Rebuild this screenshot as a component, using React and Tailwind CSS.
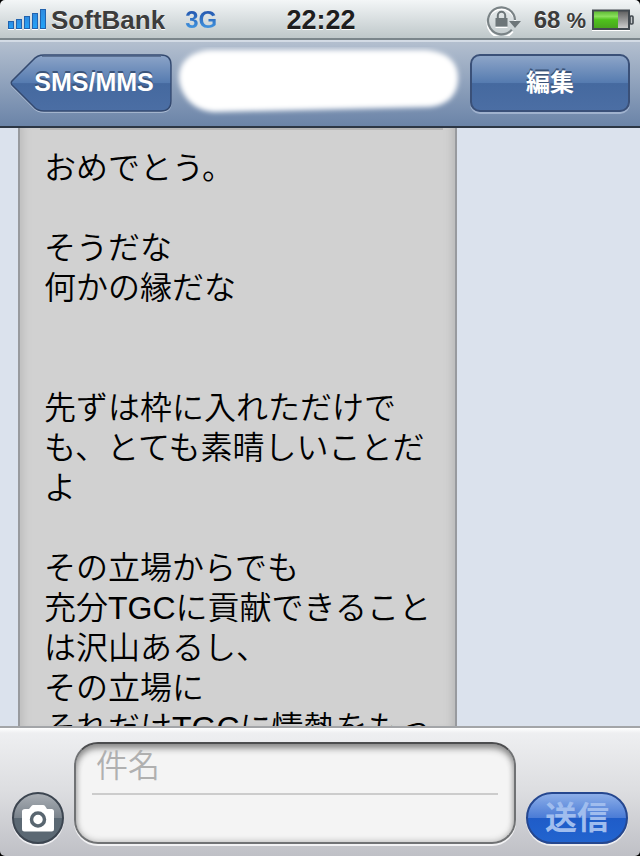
import React, { useState } from 'react';

const MESSAGE = `おめでとう。

そうだな
何かの縁だな


先ずは枠に入れただけで
も、とても素晴しいことだ
よ

その立場からでも
充分TGCに貢献できること
は沢山あるし、
その立場に
それだけTGCに情熱をもっ`;

const SignalIcon = () => (
  <svg width="39" height="22" viewBox="0 0 39 22" aria-hidden="true">
    <defs>
      <linearGradient id="signal" x1="0" y1="0" x2="0" y2="1">
        <stop offset="0" stopColor="#2f8be0" />
        <stop offset="1" stopColor="#22a4f8" />
      </linearGradient>
    </defs>
    <g fill="url(#signal)" stroke="#2163ae" strokeWidth="1">
      <rect x="0.5" y="12.5" width="5" height="7" />
      <rect x="8.5" y="10.5" width="5" height="9" />
      <rect x="16.5" y="7.5" width="5" height="12" />
      <rect x="24.5" y="4.5" width="5" height="15" />
      <rect x="32.5" y="0.5" width="5" height="19" />
    </g>
    <path d="M0 20.5h6M8 20.5h6M16 20.5h6M24 20.5h6M32 20.5h6" stroke="#fff" />
  </svg>
);

const RotationLockIcon = () => (
  <svg width="36" height="32" viewBox="0 0 36 32" aria-hidden="true">
    <path d="M26.8 26.5A14 14 0 1 1 29.5 17" transform="translate(0 1)" fill="none" stroke="#fff" strokeWidth="2" />
    <path d="M25.8 25.6A13.5 13.5 0 1 1 29 16" fill="none" stroke="#7a8386" strokeWidth="2.2" />
    <path d="M23 17h12l-6 7z" fill="#6d7679" />
    <rect x="9.5" y="14" width="12" height="8.5" fill="#6d7679" />
    <path d="M11.8 14.5v-3a3.7 3.7 0 0 1 7.4 0v3" fill="none" stroke="#6d7679" strokeWidth="2" />
    <path d="M9.5 23.5h12" stroke="#fff" />
  </svg>
);

const BatteryIcon = () => (
  <svg width="42" height="22" viewBox="0 0 42 22" aria-hidden="true">
    <defs>
      <linearGradient id="charge" x1="0" y1="0" x2="0" y2="1">
        <stop offset="0" stopColor="#5fbb36" />
        <stop offset="0.3" stopColor="#8be05c" />
        <stop offset="0.5" stopColor="#4fc21c" />
        <stop offset="1" stopColor="#48a41e" />
      </linearGradient>
      <linearGradient id="empty" x1="0" y1="0" x2="0" y2="1">
        <stop offset="0" stopColor="#5c5c5c" />
        <stop offset="1" stopColor="#d2d2d2" />
      </linearGradient>
    </defs>
    <path d="M0 21.5h38" stroke="#fff" />
    <rect x="1" y="1.500" width="36" height="18.500" fill="url(#empty)" stroke="#42494f" strokeWidth="2" />
    <rect x="2" y="2.500" width="24" height="16.500" fill="url(#charge)" />
    <rect x="38" y="7" width="3" height="8" rx="1" fill="#c5cacc" stroke="#42494f" strokeWidth="1.6" />
  </svg>
);

const BackShape = () => (
  <svg className="absolute inset-0 h-full w-full" viewBox="0 0 162 60" aria-hidden="true">
    <defs>
      <linearGradient id="back" x1="0" y1="0" x2="0" y2="1">
        <stop offset="0" stopColor="#8da5c8" />
        <stop offset="0.5" stopColor="#557bb0" />
        <stop offset="0.51" stopColor="#45699f" />
        <stop offset="1" stopColor="#4b6ea4" />
      </linearGradient>
    </defs>
    <path
      d="M34 2H151Q161 2 161 12V48Q161 58 151 58H34Q27 58 23 53L2 32Q0.5 30 2 28L23 7Q27 2 34 2Z"
      fill="none"
      stroke="#b2c1d8"
      strokeWidth="1.5"
      transform="translate(0 1)"
    />
    <path
      d="M34 2H151Q161 2 161 12V48Q161 58 151 58H34Q27 58 23 53L2 32Q0.5 30 2 28L23 7Q27 2 34 2Z"
      fill="url(#back)"
      stroke="#344a70"
      strokeWidth="1.5"
    />
    <path d="M32 3.500H151" stroke="#3e5172" strokeWidth="1" opacity="0.6" />
  </svg>
);

const ContactName = () => (
  <svg className="h-[72px] min-w-0 flex-1" viewBox="0 0 298 72" preserveAspectRatio="none" aria-hidden="true">
    <defs>
      <filter id="soft" x="-10%" y="-20%" width="120%" height="140%">
        <feGaussianBlur stdDeviation="2.5" />
      </filter>
    </defs>
    <path
      d="M38 3L252 3C276 4 286 16 286 31C286 47 276 59 256 60L42 65C20 64 7 46 7 30C7 14 20 4 38 3Z"
      fill="#fff"
      filter="url(#soft)"
    />
  </svg>
);

const CameraIcon = () => (
  <svg width="32" height="27" viewBox="0 0 32 27" aria-hidden="true">
    <path
      d="M3 4H7L9.5 1Q10 0 11.5 0H21Q22.500 0 23 1L25 4H29.500Q32 4 32 6.500V24Q32 26.500 29.500 26.500H2.500Q0 26.500 0 24V6.500Q0 4 3 4Z"
      fill="#fff"
    />
    <circle cx="16" cy="14.500" r="6.500" fill="#fff" stroke="#596670" strokeWidth="3.500" />
  </svg>
);

const StatusBar = () => (
  <header className="grid h-10 shrink-0 grid-cols-[1fr_auto_1fr] items-center border-b-2 border-[#7b868b] bg-gradient-to-b from-[#f3f6f7] to-[#bfc8ca] pr-1.5 pl-2 text-[26px] font-bold text-[#3c3c3c] [text-shadow:0_1px_0_#fff]">
    <div className="flex items-center gap-1">
      <SignalIcon />
      <span>SoftBank</span>
      <span className="ml-4 bg-gradient-to-b from-[#1d3f9c] to-[#4fb0f5] bg-clip-text text-2xl text-transparent [text-shadow:none]">
        3G
      </span>
    </div>
    <time className="text-[27px] text-[#1e1e1e]">22:22</time>
    <div className="flex items-center justify-end gap-1.5">
      <RotationLockIcon />
      <div className="ml-1.5 flex items-center gap-1.5 text-2xl">
        <span>68</span>
        <span className="text-[22px]">%</span>
      </div>
      <BatteryIcon />
    </div>
  </header>
);

const NavBar = () => (
  <nav className="flex h-[88px] shrink-0 items-center border-t-2 border-b-2 border-t-[#d3dbe5] border-b-[#2c3644] bg-gradient-to-b from-[#b3bfcf] to-[#6b84a8] px-2.5 pb-0.5 text-white">
    <button
      type="button"
      className="relative h-[60px] w-[162px] shrink-0 pl-1.5 text-[25px] font-bold [text-shadow:0_-2px_0_#3b5479]"
    >
      <BackShape />
      <span className="relative">SMS/MMS</span>
    </button>
    <ContactName />
    <button
      type="button"
      className="h-[58px] w-40 shrink-0 rounded-[10px] border-2 border-[#3a5078] bg-[linear-gradient(#8da5c8,#557bb0_50%,#45699f_51%,#4b6ea4)] text-2xl font-bold shadow-[0_2px_0_#a0b2ce] [text-shadow:0_-2px_0_#3b5479]"
    >
      編集
    </button>
  </nav>
);

const Thread = () => (
  <main className="min-h-0 flex-1 overflow-hidden bg-[#dbe2ed]">
    <article className="mr-[183px] ml-[18px] h-full overflow-hidden border-x-2 border-[#989a9e] bg-[#d1d1d1] pr-3 pl-6 shadow-[inset_10px_0_10px_-8px_#b8b8b8,inset_-10px_0_10px_-8px_#b4b4b4]">
      <hr className="-ml-1 border-t-2 border-[#b5b5b5]" />
      <p className="pt-[18px] text-[32px] leading-10 font-[350] whitespace-pre-line text-black">{MESSAGE}</p>
    </article>
  </main>
);

const Composer = () => {
  const [subject, setSubject] = useState('');
  const [body, setBody] = useState('');

  const handleSubmit = (event) => {
    event.preventDefault();
    setSubject('');
    setBody('');
  };

  return (
    <form
      onSubmit={handleSubmit}
      className="flex h-[130px] shrink-0 items-end gap-2.5 border-t-2 border-[#a3a5a8] bg-[linear-gradient(#fff,#eeeff1_4%,#dcdde0_50%,#bfc0c6)] px-3 pb-3"
    >
      <button
        type="button"
        aria-label="Camera"
        className="flex size-[52px] shrink-0 items-center justify-center rounded-full border-2 border-[#3c4550] bg-[linear-gradient(#a9aeb4,#7a838c_50%,#5b6873_51%,#5b6873)] shadow-[0_2px_0_#ededf0]"
      >
        <CameraIcon />
      </button>
      <div className="flex h-[102px] min-w-0 flex-1 flex-col rounded-[24px] border-2 border-[#707274] border-t-[#4c4d4f] bg-[#f4f4f4] px-4 shadow-[inset_0_6px_7px_-2px_#888,inset_0_0_6px_#aaa,0_2px_0_#f2f2f4]">
        <input
          type="text"
          aria-label="件名"
          placeholder="件名"
          value={subject}
          onChange={(e) => setSubject(e.target.value)}
          className="h-[51px] w-full shrink-0 border-b-2 border-[#cccccc] bg-transparent px-1 pb-1 text-[32px] font-[350] outline-none placeholder:text-[#b0b0b0]"
        />
        <textarea
          aria-label="メッセージ"
          value={body}
          onChange={(e) => setBody(e.target.value)}
          className="min-h-0 w-full flex-1 resize-none bg-transparent px-1 text-[32px] outline-none"
        />
      </div>
      <button
        type="submit"
        className="h-[52px] w-[102px] shrink-0 rounded-full border-2 border-[#25478f] bg-[linear-gradient(#8caee8,#4a7bd6_50%,#1f5cc8_51%,#2264cf)] text-[32px] leading-none font-bold text-[#a0bdee] shadow-[0_2px_0_#ededf0]"
      >
        送信
      </button>
    </form>
  );
};

const App = () => (
  <div className="h-screen bg-black">
    <div className="flex h-full flex-col overflow-hidden rounded-[5px] font-['Liberation_Sans','Noto_Sans_CJK_JP',sans-serif]">
      <StatusBar />
      <NavBar />
      <Thread />
      <Composer />
    </div>
  </div>
);

export default App;
